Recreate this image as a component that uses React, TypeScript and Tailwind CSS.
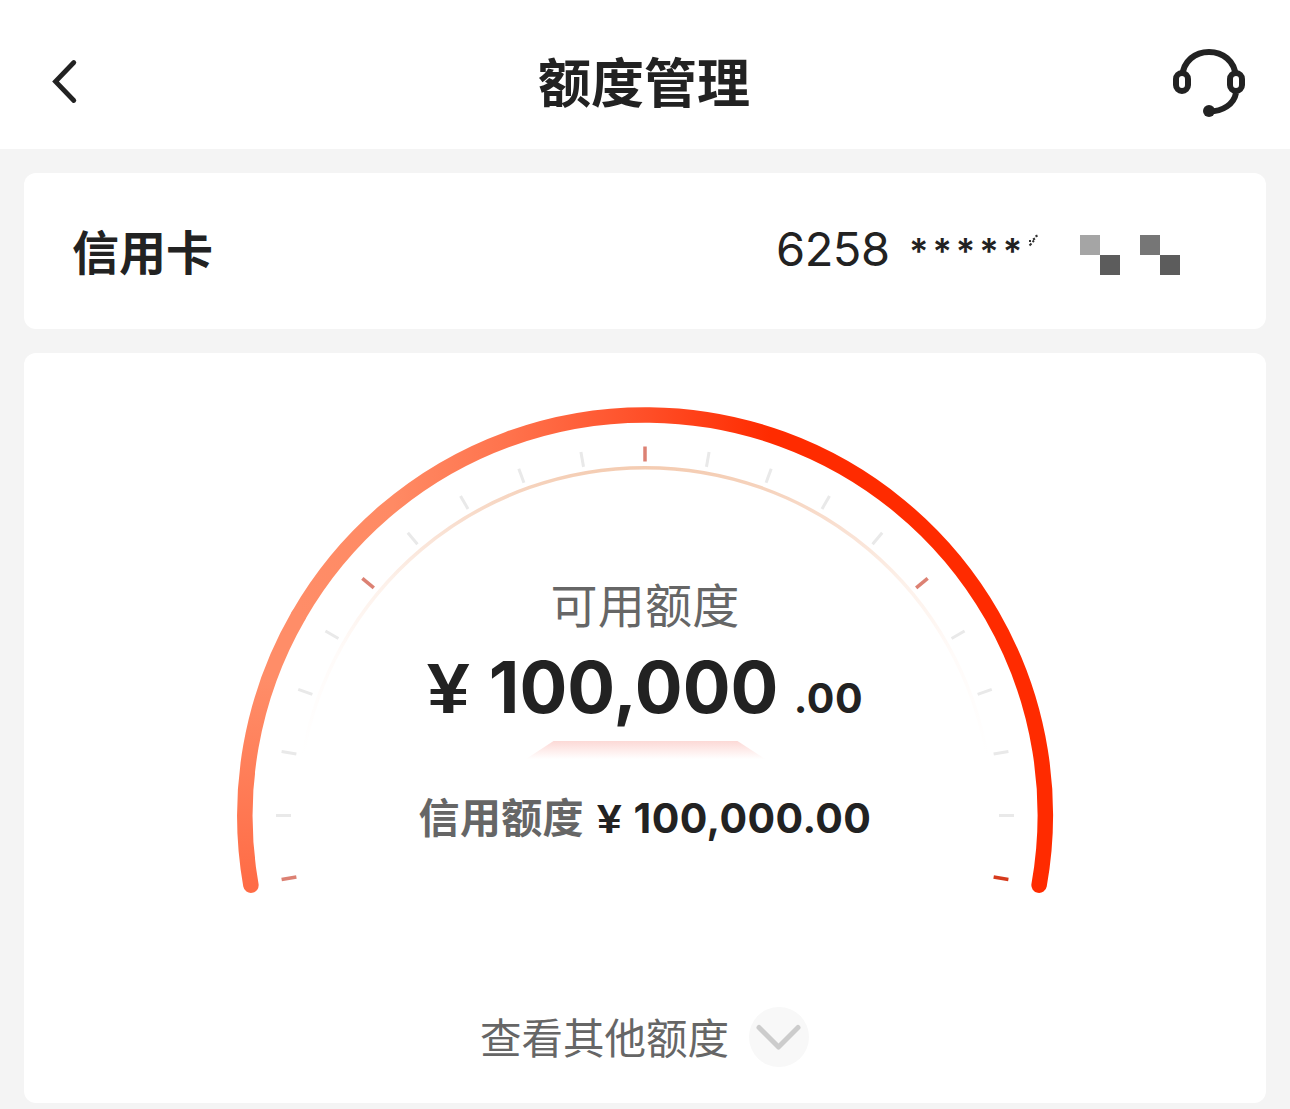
const ticks = Array.from({ length: 21 }, (_, i) => (i - 10) * 10);

function tickColor(angle: number) {
  if (angle === 100) return "#d63a1c";
  return angle % 50 === 0 ? "#dc8173" : "#e9e9e9";
}

function HeadsetIcon() {
  return (
    <svg className="h-[72px] w-[76px]" viewBox="0 0 76 72" fill="none" stroke="#222" strokeWidth="6">
      <path d="M11.3 30C12.5 15 24 6 38 6s25.500 9 26.700 24" />
      <rect x="5" y="27" width="12" height="18" rx="6" />
      <rect x="59" y="27" width="12" height="18" rx="6" />
      <path d="M65 47c-2 11-13 18.500-27 18.500" />
      <circle cx="38" cy="65" r="6" fill="#222" stroke="none" />
    </svg>
  );
}

function Header() {
  return (
    <header className="flex h-[149px] items-center justify-between bg-white pr-[43px] pl-[52px] pt-[14px]">
      <svg className="h-[46px] w-[76px]" viewBox="0 0 76 46" fill="none" stroke="#222" strokeWidth="4.800" strokeLinecap="round">
        <path d="M21.800 3.500L3.500 22.500L21.800 41.500" />
      </svg>
      <h1 className="mr-[11px] pb-[4px] text-[53px] leading-[60px] font-bold">额度管理</h1>
      <HeadsetIcon />
    </header>
  );
}

function CardRow() {
  return (
    <section className="flex h-[156px] items-center justify-between rounded-xl bg-white pr-[86px] pl-12">
      <h2 className="pb-[2px] text-[47px] leading-[60px] font-bold">信用卡</h2>
      <div className="flex items-center">
        <span className="w-[133px] pb-[4px] font-[Inter] text-[47px] leading-[60px] tracking-[-0.5px]">6258</span>
        <span className="w-[119px] pb-px font-[Inter] text-[36px] leading-[60px] font-semibold tracking-[4px]">*****</span>
        <svg className="mr-[42px] mb-[16px] h-5 w-[10px]" viewBox="0 0 10 20" stroke="#333" strokeWidth="2">
          <path d="M7.500 3.500l2-1M5 6.500l2-1M1 8h2M4.500 9l1.500-1.500M1.500 12.500l2-2" />
        </svg>
        <div className="mt-[8px] grid grid-cols-[20px_20px_20px_20px_20px] grid-rows-[20px_20px]">
          <i className="bg-[#a5a5a5]" />
          <i />
          <i />
          <i className="bg-[#767676]" />
          <i />
          <i />
          <i className="bg-[#5c5c5c]" />
          <i />
          <i />
          <i className="bg-[#5c5c5c]" />
        </div>
      </div>
    </section>
  );
}

function Gauge() {
  return (
    <svg className="absolute top-0 left-0 h-[560px] w-[1242px]" viewBox="24 353 1242 560" fill="none">
      <defs>
        <linearGradient id="tail" gradientUnits="userSpaceOnUse" x1="0" y1="885" x2="0" y2="680">
          <stop offset="0" stopColor="#ff6c46" />
          <stop offset="1" stopColor="#ff8d68" />
        </linearGradient>
        <linearGradient id="sweep" gradientUnits="userSpaceOnUse" x1="298" y1="0" x2="770" y2="0">
          <stop offset="0" stopColor="#ff8d68" />
          <stop offset="0.200" stopColor="#ff8a64" />
          <stop offset="0.450" stopColor="#ff724c" />
          <stop offset="0.740" stopColor="#ff4e27" />
          <stop offset="1" stopColor="#ff2b00" />
        </linearGradient>
        <linearGradient id="inner" gradientUnits="userSpaceOnUse" x1="0" y1="467" x2="0" y2="755">
          <stop offset="0" stopColor="#f4ccb2" />
          <stop offset="0.200" stopColor="#f9dfd0" />
          <stop offset="0.400" stopColor="#fdf1ea" />
          <stop offset="0.650" stopColor="#fffbf9" />
          <stop offset="1" stopColor="#ffffff" />
        </linearGradient>
      </defs>
      <path d="M250.900 885.200A400 400 0 0 1 298.590 615.500" stroke="url(#tail)" strokeWidth="15.500" strokeLinecap="round" />
      <path d="M298.590 615.500A400 400 0 0 1 1039.100 885.200" stroke="url(#sweep)" strokeWidth="15.500" strokeLinecap="round" />
      <path d="M303 756A347 347 0 0 1 987 756" stroke="url(#inner)" strokeWidth="3.500" />
      {ticks.map((angle) => (
        <path key={angle} d="M645 446.500v15" stroke={tickColor(angle)} strokeWidth={angle % 50 === 0 ? 3.5 : 3} transform={`rotate(${angle} 645 815.500)`} />
      ))}
    </svg>
  );
}

function QuotaCard() {
  return (
    <section className="relative flex h-[750px] flex-col items-center rounded-xl bg-white">
      <Gauge />
      <p className="mt-[220px] text-[47px] leading-[60px] tracking-[0.2px] text-[#666]">可用额度</p>
      <div className="mt-[14px] flex h-[80px] items-baseline leading-[80px] font-bold">
        <span className="w-[62px]">
          <span className="inline-block origin-left scale-x-[1.08] font-['Liberation_Sans'] text-[71px]">¥</span>
        </span>
        <span className="w-[305px] font-[Inter] text-[71px]">100,000</span>
        <span className="font-[Inter] text-[41px] tracking-[0.5px]">.00</span>
      </div>
      <div className="mt-[14px] ml-px h-[19px] w-[242px] bg-linear-to-b from-[#fcd9d6] to-white to-95% [clip-path:polygon(12%_0,88%_0,100%_100%,0_100%)]" />
      <div className="mt-[25px] flex h-[60px] items-baseline leading-[60px] font-bold">
        <span className="w-[178px] text-[41px] tracking-[0.3px] text-[#666]">信用额度</span>
        <span className="w-[37px]">
          <span className="inline-block origin-left scale-x-[1.08] font-['Liberation_Sans'] text-[41px]">¥</span>
        </span>
        <span className="font-[Inter] text-[41px] tracking-[0.4px]">100,000.00</span>
      </div>
      <button className="mt-[161px] flex items-center gap-5 text-[41.500px] leading-[60px] text-[#666]">
        <span className="pb-[2px]">查看其他额度</span>
        <span className="mr-[1px] flex size-[60px] items-center justify-center rounded-full bg-[#f8f8f8]">
          <svg className="h-[28px] w-[46px]" viewBox="0 0 46 28" fill="none" stroke="#ccc" strokeWidth="5" strokeLinecap="round" strokeLinejoin="round">
            <path d="M3 4.500L22.500 24L42 4.500" />
          </svg>
        </span>
      </button>
    </section>
  );
}

export default function App() {
  return (
    <div className="h-[1109px] w-[1290px] overflow-hidden bg-[#f4f4f4] font-['Noto_Sans_CJK_SC',sans-serif] text-[#222]">
      <Header />
      <main className="flex flex-col gap-6 p-6">
        <CardRow />
        <QuotaCard />
      </main>
    </div>
  );
}
